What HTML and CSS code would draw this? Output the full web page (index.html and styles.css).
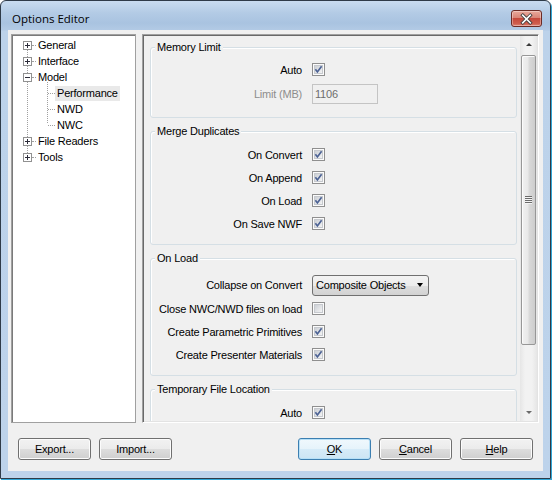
FILE: index.html
```html
<!DOCTYPE html>
<html>
<head>
<meta charset="utf-8">
<title>Options Editor</title>
<link rel="stylesheet" href="styles.css">
</head>
<body>
<svg class="defs" width="0" height="0" aria-hidden="true">
  <defs>
    <linearGradient id="cbg" x1="0" y1="0" x2="1" y2="1">
      <stop offset="0" stop-color="#c9cdd3"/>
      <stop offset="1" stop-color="#f6f6f6"/>
    </linearGradient>
    <symbol id="cb-on" viewBox="0 0 13 13">
      <rect x="0.5" y="0.5" width="12" height="12" fill="#fbfbfb" stroke="#8f8f8f"/>
      <rect x="2.5" y="2.5" width="8" height="8" fill="url(#cbg)" stroke="#c6c9ce"/>
      <path d="M3.4 6.3 L5.4 8.9 L9.6 3.3" fill="none" stroke="#4c6294" stroke-width="1.7"/>
    </symbol>
    <symbol id="cb-off" viewBox="0 0 13 13">
      <rect x="0.5" y="0.5" width="12" height="12" fill="#fbfbfb" stroke="#8f8f8f"/>
      <rect x="2.5" y="2.5" width="8" height="8" fill="url(#cbg)" stroke="#c6c9ce"/>
    </symbol>
    <symbol id="exp-plus" viewBox="0 0 9 9">
      <rect x="0.5" y="0.5" width="8" height="8" fill="#fff" stroke="#919191"/>
      <path d="M2 4.5h5M4.5 2v5" stroke="#2c2c3a" stroke-width="1"/>
    </symbol>
    <symbol id="exp-minus" viewBox="0 0 9 9">
      <rect x="0.5" y="0.5" width="8" height="8" fill="#fff" stroke="#919191"/>
      <path d="M2 4.5h5" stroke="#2c2c3a" stroke-width="1"/>
    </symbol>
  </defs>
</svg>

<div class="window">
  <div class="titlebar">
    <span class="title">Options Editor</span>
    <button class="close" aria-label="Close">
      <svg width="31" height="16" viewBox="0 0 31 16">
        <path d="M11.5 4 L19.5 12 M19.5 4 L11.5 12" stroke="#3d3d3d" stroke-width="3.6" stroke-linecap="square"/>
        <path d="M11.5 4 L19.5 12 M19.5 4 L11.5 12" stroke="#ffffff" stroke-width="1.8" stroke-linecap="square"/>
      </svg>
    </button>
  </div>

  <div class="client">
    <div class="main">
      <div class="tree">
        <ul class="tree-root">
          <li><div class="trow"><svg class="exp"><use href="#exp-plus"/></svg><span class="dash"></span><span class="tlbl">General</span></div></li>
          <li><div class="trow"><svg class="exp"><use href="#exp-plus"/></svg><span class="dash"></span><span class="tlbl">Interface</span></div></li>
          <li><div class="trow"><svg class="exp"><use href="#exp-minus"/></svg><span class="dash"></span><span class="tlbl">Model</span></div>
            <ul class="children">
              <li><div class="trow child"><span class="dash cdash"></span><span class="tlbl sel">Performance</span></div></li>
              <li><div class="trow child"><span class="dash cdash"></span><span class="tlbl">NWD</span></div></li>
              <li><div class="trow child"><span class="dash cdash"></span><span class="tlbl">NWC</span></div></li>
            </ul>
          </li>
          <li><div class="trow"><svg class="exp"><use href="#exp-plus"/></svg><span class="dash"></span><span class="tlbl">File Readers</span></div></li>
          <li><div class="trow"><svg class="exp"><use href="#exp-plus"/></svg><span class="dash"></span><span class="tlbl">Tools</span></div></li>
        </ul>
      </div>

      <div class="panel">
        <div class="content">
          <fieldset class="group mem-group">
            <legend>Memory Limit</legend>
            <div class="grid mem">
              <span class="lbl">Auto</span><svg class="cb"><use href="#cb-on"/></svg>
              <span class="lbl dis">Limit (MB)</span><span class="input">1106</span>
            </div>
          </fieldset>

          <fieldset class="group merge-group">
            <legend>Merge Duplicates</legend>
            <div class="grid">
              <span class="lbl">On Convert</span><svg class="cb"><use href="#cb-on"/></svg>
              <span class="lbl">On Append</span><svg class="cb"><use href="#cb-on"/></svg>
              <span class="lbl">On Load</span><svg class="cb"><use href="#cb-on"/></svg>
              <span class="lbl">On Save NWF</span><svg class="cb"><use href="#cb-on"/></svg>
            </div>
          </fieldset>

          <fieldset class="group onload-group">
            <legend>On Load</legend>
            <div class="grid onload">
              <span class="lbl">Collapse on Convert</span><span class="select">Composite Objects<span class="arrow"></span></span>
              <span class="lbl">Close NWC/NWD files on load</span><svg class="cb"><use href="#cb-off"/></svg>
              <span class="lbl">Create Parametric Primitives</span><svg class="cb"><use href="#cb-on"/></svg>
              <span class="lbl">Create Presenter Materials</span><svg class="cb"><use href="#cb-on"/></svg>
            </div>
          </fieldset>

          <fieldset class="group">
            <legend>Temporary File Location</legend>
            <div class="grid">
              <span class="lbl">Auto</span><svg class="cb"><use href="#cb-on"/></svg>
            </div>
          </fieldset>
        </div>

        <div class="scrollbar">
          <div class="sb-btn"><span class="tri up"></span></div>
          <div class="sb-track">
            <div class="thumb"><span class="grip"></span></div>
          </div>
          <div class="sb-btn"><span class="tri down"></span></div>
        </div>
      </div>
    </div>

    <div class="buttons">
      <div class="btn-group">
        <button class="btn">Export...</button>
        <button class="btn">Import...</button>
      </div>
      <div class="btn-group">
        <button class="btn default"><u>O</u>K</button>
        <button class="btn"><u>C</u>ancel</button>
        <button class="btn"><u>H</u>elp</button>
      </div>
    </div>
  </div>
</div>
</body>
</html>
```

FILE: styles.css
```css
* { box-sizing: border-box; }

html, body {
  margin: 0;
  padding: 0;
}

body {
  width: 552px;
  height: 480px;
  background: #ffffff;
  font-family: "Liberation Sans", Arial, sans-serif;
  font-size: 11px;
  letter-spacing: -0.2px;
  color: #000;
  overflow: hidden;
}

.defs {
  position: absolute;
  width: 0;
  height: 0;
  overflow: hidden;
}

/* ---------- window frame ---------- */
.window {
  width: 551px;
  height: 479px;
  border: 1px solid #2f3b48;
  border-radius: 6px 6px 0 0;
  box-shadow: 1px 1px 0 #31a6d6;
  background: linear-gradient(180deg, #c9dcf0 0px, #b3cbe5 12px, #a9c3e0 22px, #b2cae5 29px, #bcd2ea 30px, #bdd3eb 100%);
  display: flex;
  flex-direction: column;
  padding: 0 7px 7px 7px;
}

.titlebar {
  height: 29px;
  display: flex;
  justify-content: space-between;
  align-items: flex-start;
}

.title {
  font-family: "Open Sans", "Liberation Sans", sans-serif;
  font-size: 11.5px;
  letter-spacing: 0;
  line-height: 16px;
  margin: 10px 0 0 4px;
  color: #000;
}

.close {
  margin: 9px 1px 0 0;
  width: 31px;
  height: 17px;
  padding: 0;
  border: 1px solid #6b2b25;
  border-radius: 3px;
  background: linear-gradient(180deg, #e9a99b 0%, #d98577 45%, #c5493b 50%, #cf5e4e 85%, #e0897a 100%);
  box-shadow: inset 0 0 0 1px rgba(255, 255, 255, 0.35);
  display: flex;
  align-items: center;
  justify-content: center;
}

.close svg { display: block; }

/* ---------- client area ---------- */
.client {
  flex: 1;
  background: #f0f0f0;
  display: flex;
  flex-direction: column;
  padding: 4px 4px 11px 3px;
}

.main {
  display: flex;
  gap: 6px;
  height: 389px;
}

/* ---------- tree ---------- */
.tree {
  width: 125px;
  background: #fff;
  border: 1px solid #a0a0a0;
  box-shadow: inset 1px 1px 0 #7a7a7a;
}

.tree ul {
  list-style: none;
  margin: 0;
  padding: 0;
}

.tree-root {
  position: relative;
  padding-top: 2px !important;
}

.tree-root::before {
  content: "";
  position: absolute;
  left: 15px;
  top: 10px;
  height: 112px;
  border-left: 1px dotted #a0a0a0;
}

.children {
  position: relative;
}

.children::before {
  content: "";
  position: absolute;
  left: 35px;
  top: -3px;
  height: 41px;
  border-left: 1px dotted #a0a0a0;
}

.trow {
  height: 16px;
  display: flex;
  align-items: center;
  padding-left: 11px;
  white-space: nowrap;
}

.trow.child {
  padding-left: 36px;
}

.exp {
  width: 9px;
  height: 9px;
  display: block;
  position: relative;
  flex: none;
}

.dash {
  width: 4px;
  height: 0;
  border-top: 1px dotted #a0a0a0;
  flex: none;
}

.cdash {
  width: 7px;
}

.tlbl {
  padding: 0 2px;
  line-height: 15px;
}

.tlbl.sel {
  background: #e9e9e9;
}

/* ---------- right panel ---------- */
.panel {
  flex: 1;
  display: flex;
  border: 1px solid;
  border-color: #a0a0a0 #ffffff #ffffff #a0a0a0;
  box-shadow: inset 1px 1px 0 #696969, inset -1px -1px 0 #e3e3e3;
  padding: 1px;
}

.content {
  flex: 1;
  overflow: hidden;
  padding-top: 5px;
}

.group {
  margin: 0 3px 7px 6px;
  padding: 5px 8px 8px 8px;
  border: 1px solid #d5dfe5;
  border-radius: 3px;
  box-shadow: inset 1px 1px 0 #ffffff;
  min-inline-size: 0;
}

.group.mem-group {
  padding-top: 4px;
  padding-bottom: 10px;
}

.group.merge-group {
  padding-bottom: 9px;
}

.group.onload-group {
  padding-bottom: 9px;
}

.group legend {
  padding: 0 2px;
  margin-left: -4px;
  line-height: 13px;
  background: #f0f0f0;
  color: #000;
}

.grid {
  display: grid;
  grid-template-columns: 143px 1fr;
  column-gap: 10px;
  grid-auto-rows: 23px;
  align-items: center;
}

.grid.mem {
  grid-template-rows: 23px 26px;
}

.grid.onload {
  margin-top: 3px;
  grid-template-rows: 24px;
}

.lbl {
  text-align: right;
  white-space: nowrap;
}

.lbl.dis {
  color: #8d8d8d;
}

.cb {
  width: 13px;
  height: 13px;
  display: block;
}

.input {
  width: 66px;
  height: 20px;
  border: 1px solid #c4c4c4;
  background: #f0f0f0;
  color: #6d6d6d;
  padding-left: 2px;
  line-height: 18px;
  justify-self: start;
}

.select {
  width: 117px;
  height: 21px;
  border: 1px solid #707070;
  border-radius: 3px;
  background: linear-gradient(180deg, #f3f3f3 0%, #ececec 50%, #dedede 51%, #d2d2d2 100%);
  padding-left: 3px;
  line-height: 19px;
  display: flex;
  justify-content: space-between;
  align-items: center;
  justify-self: start;
}

.arrow {
  width: 0;
  height: 0;
  border-left: 3.5px solid transparent;
  border-right: 3.5px solid transparent;
  border-top: 4px solid #000;
  margin-right: 5px;
}

/* ---------- scrollbar ---------- */
.scrollbar {
  width: 17px;
  display: flex;
  flex-direction: column;
  background: linear-gradient(90deg, #e6e6e6 0%, #f2f2f2 30%, #f2f2f2 70%, #e6e6e6 100%);
}

.sb-btn {
  height: 17px;
  display: flex;
  align-items: center;
  justify-content: center;
}

.tri {
  width: 0;
  height: 0;
  border-left: 3px solid transparent;
  border-right: 3px solid transparent;
}

.tri.up { border-bottom: 3px solid #3a3a3a; }
.tri.down { border-top: 3px solid #6a6a6a; }

.sb-track {
  flex: 1;
  padding: 2px 1px 0 1px;
}

.thumb {
  height: 290px;
  border: 1px solid #979797;
  border-radius: 2px;
  background: linear-gradient(90deg, #f1f1f1 0%, #e8e8e8 45%, #d9d9d9 55%, #cdcdcd 100%);
  box-shadow: inset 1px 1px 0 #fbfbfb;
  display: flex;
  align-items: center;
  justify-content: center;
}

.grip {
  width: 7px;
  height: 8px;
  background: repeating-linear-gradient(180deg, #6b6b6b 0px, #6b6b6b 1px, #f4f4f4 1px, #f4f4f4 2px);
}

/* ---------- buttons ---------- */
.buttons {
  margin-top: 15px;
  display: flex;
  justify-content: space-between;
  padding: 0 6px 0 7px;
}

.btn-group {
  display: flex;
  gap: 8px;
}

.btn {
  width: 73px;
  height: 22px;
  border: 1px solid #707070;
  border-radius: 3px;
  background: linear-gradient(180deg, #f2f2f2 0%, #ebebeb 50%, #dddddd 51%, #cfcfcf 100%);
  box-shadow: inset 0 0 0 1px #fcfcfc;
  font-family: "Liberation Sans", Arial, sans-serif;
  font-size: 11px;
  letter-spacing: -0.2px;
  color: #000;
  padding: 0;
}

.btn.default {
  border-color: #3c7fb1;
  background: linear-gradient(180deg, #f0f8fd 0%, #e6f3fb 50%, #d6ebf8 51%, #cce5f4 100%);
  box-shadow: inset 0 0 0 1px #b7e0f7;
}

.btn u {
  text-decoration: underline;
}
```
